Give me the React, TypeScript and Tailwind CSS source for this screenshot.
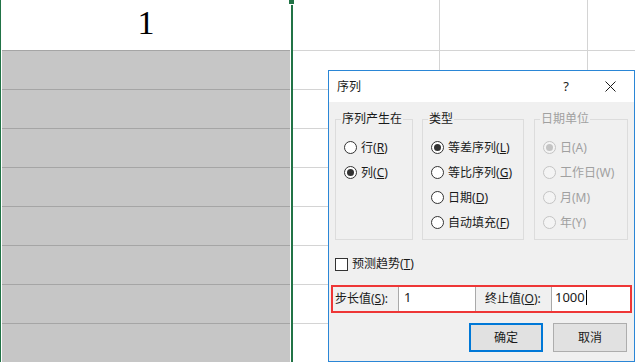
import React from "react";

const ui = "font-['Noto_Sans','Noto_Sans_CJK_SC',sans-serif]";

function Radio({ checked, disabled }: { checked?: boolean; disabled?: boolean }) {
  return (
    <span
      className={`flex h-[13px] w-[13px] shrink-0 items-center justify-center rounded-full border ${
        disabled ? "border-[#c4c4c4] bg-[#f4f4f4]" : "border-[#333333] bg-white"
      }`}
    >
      {checked && (
        <span className={`h-[7px] w-[7px] rounded-full ${disabled ? "bg-[#c4c4c4]" : "bg-[#333333]"}`} />
      )}
    </span>
  );
}

type Opt = { label: string; key?: string; checked?: boolean };

function Group({
  title,
  options,
  width,
  disabled,
  radioPad,
}: {
  title: string;
  options: Opt[];
  width: string;
  disabled?: boolean;
  radioPad: string;
}) {
  return (
    <fieldset className={`${width} h-[129px] border border-[#dcdcdc]`}>
      <legend className={`ml-[5px] px-[1px] text-[12px] leading-[16px] ${disabled ? "text-[#a0a0a0]" : "text-[#1a1a1a]"}`}>
        {title}
      </legend>
      <div className={`flex flex-col pt-[8px] ${radioPad}`}>
        {options.map((o) => (
          <div key={o.label} className="flex h-[25px] items-center gap-[4px]">
            <Radio checked={o.checked} disabled={disabled} />
            <span className={`text-[12px] leading-[16px] ${disabled ? "text-[#a0a0a0]" : "text-[#1a1a1a]"}`}>
              {o.label}
              {o.key ? (
                <>
                  (<u>{o.key}</u>)
                </>
              ) : null}
            </span>
          </div>
        ))}
      </div>
    </fieldset>
  );
}

function SeriesDialog() {
  return (
    <div className={`absolute left-[328px] top-[70px] flex h-[292px] w-[307px] flex-col border border-[#2a86d6] bg-[#f0f0f0] ${ui}`}>
      {/* title bar */}
      <div className="flex h-[31px] shrink-0 items-center bg-white pl-[8px] text-[12px] text-[#1a1a1a]">
        <span className="flex-1">序列</span>
        <span className="mr-[36px] text-[13px]">?</span>
        <svg width="11" height="11" viewBox="0 0 11 11" className="mr-[18px]">
          <path d="M0.5 0.5 L10.5 10.5 M10.5 0.5 L0.5 10.5" stroke="#1a1a1a" strokeWidth="1" />
        </svg>
      </div>

      <div className="flex flex-1 flex-col px-[6px] pt-[9px]">
        <div className="flex">
          <Group
            title="序列产生在"
            width="w-[78px]"
            radioPad="pl-[8px]"
            options={[
              { label: "行", key: "R" },
              { label: "列", key: "C", checked: true },
            ]}
          />
          <Group
            title="类型"
            width="ml-[9px] w-[102px]"
            radioPad="pl-[8px]"
            options={[
              { label: "等差序列", key: "L", checked: true },
              { label: "等比序列", key: "G" },
              { label: "日期", key: "D" },
              { label: "自动填充", key: "F" },
            ]}
          />
          <Group
            title="日期单位"
            width="ml-[10px] w-[94px]"
            radioPad="pl-[8px]"
            disabled
            options={[
              { label: "日(A)", checked: true },
              { label: "工作日(W)" },
              { label: "月(M)" },
              { label: "年(Y)" },
            ]}
          />
        </div>

        <div className="mt-[16px] flex items-center gap-[4px]">
          <span className="h-[13px] w-[13px] border border-[#333333] bg-white" />
          <span className="text-[12px] leading-[16px] text-[#1a1a1a]">
            预测趋势(<u>T</u>)
          </span>
        </div>

        <div className="-mx-[4px] mt-[13px] flex h-[28px] border-2 border-[#ee3636] text-[12px] text-[#1a1a1a]">
          <div className="flex w-[65px] items-center pl-[2px]">
            步长值(<u>S</u>):
          </div>
          <div className="flex w-[78px] items-start border-x border-[#a9a9a9] bg-white pl-[5px] pt-[1px] text-[13px]">
            1
          </div>
          <div className="flex w-[75px] items-center pl-[9px]">
            终止值(<u>O</u>):
          </div>
          <div className="flex flex-1 items-start border-l border-[#a9a9a9] bg-white pl-[3px] pt-[1px] text-[13px]">
            1000
            <span className="ml-[1px] mt-[2px] h-[15px] w-[1px] bg-black" />
          </div>
        </div>

        <div className="mt-[10px] flex justify-end gap-[10px] pr-[1px]">
          <button className="h-[29px] w-[74px] border-2 border-[#0078d7] bg-[#e1e1e1] text-[12px] text-[#1a1a1a]">
            确定
          </button>
          <button className="h-[29px] w-[74px] border border-[#adadad] bg-[#e1e1e1] text-[12px] text-[#1a1a1a]">
            取消
          </button>
        </div>
      </div>
    </div>
  );
}

export default function App() {
  const grayRows = Array.from({ length: 8 });
  const rightRows = Array.from({ length: 8 });

  return (
    <div className="relative h-[362px] w-[635px] overflow-hidden bg-white">
      <div className="flex h-full">
        {/* selected column */}
        <div className="w-[1px] bg-[#217346]" />
        <div className="w-[1px] bg-white" />
        <div className="flex w-[288px] flex-col">
          <div className="flex h-[50px] items-start justify-center pt-[3px] font-['Liberation_Serif',serif] text-[34px] leading-[40px] text-black">
            1
          </div>
          {grayRows.map((_, i) => (
            <div key={i} className="h-[39px] shrink-0 border-t border-[#a5a5a5] bg-[#c6c6c6]" />
          ))}
        </div>
        <div className="w-[1px] bg-white" />
        <div className="flex w-[2px] flex-col">
          <div className="h-[5px]" />
          <div className="flex-1 bg-[#217346]" />
        </div>

        {/* other columns */}
        <div className="flex flex-1 flex-col">
          <div className="flex h-[51px] shrink-0 border-b border-[#d4d4d4]">
            <div className="w-[147px] border-r border-[#d4d4d4]" />
            <div className="w-[148px] border-r border-[#d4d4d4]" />
          </div>
          {rightRows.map((_, i) => (
            <div key={i} className="flex h-[39px] shrink-0 border-b border-[#d4d4d4]">
              <div className="w-[147px] border-r border-[#d4d4d4]" />
              <div className="w-[148px] border-r border-[#d4d4d4]" />
            </div>
          ))}
        </div>
      </div>

      {/* fill handle */}
      <div className="absolute left-[289px] top-0 h-[4px] w-[5px] bg-[#217346]" />

      <SeriesDialog />
    </div>
  );
}
